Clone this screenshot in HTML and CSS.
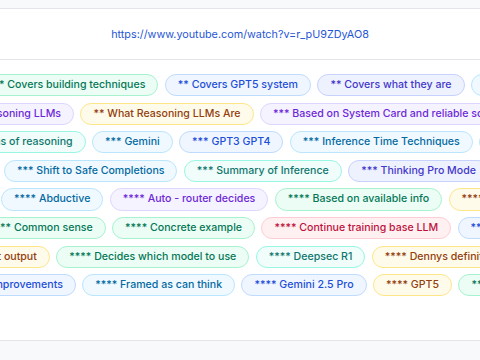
FILE: index.html
```html
<!DOCTYPE html>
<html lang="en">

<head>
    <meta charset="UTF-8">
    <meta name="viewport" content="width=device-width, initial-scale=1.0">
    <title>Topics</title>
    <link rel="stylesheet" href="styles.css">
</head>

<body>
    <div id="page">
        <header id="source">
            <a class="url" href="#">https://www.youtube.com/watch?v=r_pU9ZDyAO8</a>
        </header>
        <section id="tags">
            <div class="row r1">
                <span class="chip green">* Covers building techniques</span>
                <span class="chip blue">** Covers GPT5 system</span>
                <span class="chip indigo">** Covers what they are</span>
                <span class="chip sky">** Explains the basics</span>
            </div>
            <div class="row r2">
                <span class="chip violet">** Types of Reasoning LLMs</span>
                <span class="chip amber">** What Reasoning LLMs Are</span>
                <span class="chip violet">*** Based on System Card and reliable sources</span>
            </div>
            <div class="row r3">
                <span class="chip teal">*** Chains of reasoning</span>
                <span class="chip sky">*** Gemini</span>
                <span class="chip blue">*** GPT3 GPT4</span>
                <span class="chip sky">*** Inference Time Techniques</span>
                <span class="chip sky">*** Key ideas</span>
            </div>
            <div class="row r4">
                <span class="chip sky">*** Shift to Safe Completions</span>
                <span class="chip teal">*** Summary of Inference</span>
                <span class="chip indigo">*** Thinking Pro Mode</span>
            </div>
            <div class="row r5">
                <span class="chip sky">**** Abductive</span>
                <span class="chip violet">**** Auto - router decides</span>
                <span class="chip green">**** Based on available info</span>
                <span class="chip amber">**** Bias in output</span>
            </div>
            <div class="row r6">
                <span class="chip green">**** Common sense</span>
                <span class="chip green">**** Concrete example</span>
                <span class="chip rose">**** Continue training base LLM</span>
                <span class="chip blue">**** Controls cost</span>
            </div>
            <div class="row r7">
                <span class="chip amber">**** Correct output</span>
                <span class="chip green">**** Decides which model to use</span>
                <span class="chip teal">**** Deepsec R1</span>
                <span class="chip amber">**** Dennys definition</span>
            </div>
            <div class="row r8">
                <span class="chip blue">**** Efficiency improvements</span>
                <span class="chip sky">**** Framed as can think</span>
                <span class="chip blue">**** Gemini 2.5 Pro</span>
                <span class="chip amber">**** GPT5</span>
                <span class="chip green">**** Good reasoning</span>
            </div>
        </section>
    </div>
</body>

</html>
```

FILE: styles.css
```css
* {
    margin: 0;
    padding: 0;
    box-sizing: border-box;
}

a {
    text-decoration: none;
}

body {
    background-color: #f8f9fa;
    font-family: Inter, "Noto Sans", sans-serif;
    padding-top: 8px;
}

#page {
    border-top: 1px solid #e3e5e8;
    border-bottom: 1px solid #e3e5e8;
    background-color: #fff;
}

#source {
    height: 51px;
    display: flex;
    align-items: center;
    justify-content: center;
    border-bottom: 1px solid #e3e5e8;
}

#source .url {
    color: #1f56d6;
    font-size: 10.8px;
}

#tags {
    height: 280px;
    padding-top: 14px;
    overflow: hidden;
    display: flex;
    flex-direction: column;
    gap: 6.4px;
}

.row {
    display: flex;
    gap: 6.4px;
    white-space: nowrap;
}

.r1 { margin-left: -14px; }
.r2 { margin-left: -96px; }
.r3 { margin-left: -61px; }
.r4 { margin-left: 4px; }
.r5 { margin-left: 1px; }
.r6 { margin-left: -24px; }
.r7 { margin-left: -75px; }
.r8 { margin-left: -100px; }

.chip {
    flex-shrink: 0;
    font-size: 10.6px;
    font-weight: 500;
    line-height: 16.2px;
    padding: 2px 12px;
    border: 1px solid;
    border-radius: 999px;
}

.green { color: #047857; background-color: #ecfdf5; border-color: #a7f3d0; }
.blue { color: #1d4ed8; background-color: #eff6ff; border-color: #bfdbfe; }
.indigo { color: #4338ca; background-color: #eef2ff; border-color: #c7d2fe; }
.violet { color: #6d28d9; background-color: #f5f3ff; border-color: #ddd6fe; }
.amber { color: #92400e; background-color: #fffbeb; border-color: #fde68a; }
.teal { color: #0f766e; background-color: #f0fdfa; border-color: #99f6e4; }
.sky { color: #0369a1; background-color: #f0f9ff; border-color: #bae6fd; }
.rose { color: #be123c; background-color: #fff1f2; border-color: #fecdd3; }
```
